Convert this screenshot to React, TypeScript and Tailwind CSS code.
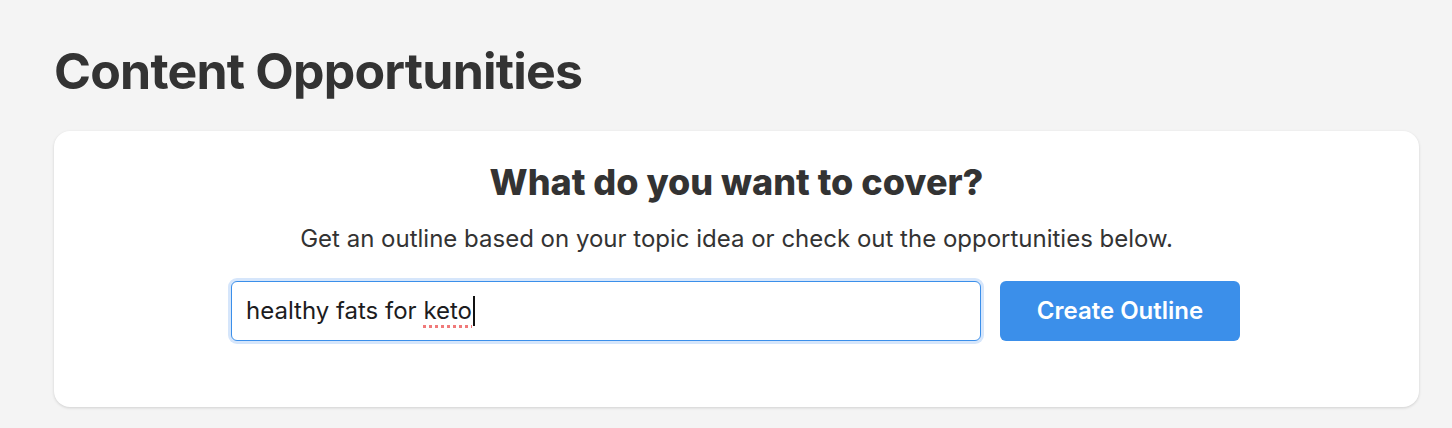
import React from 'react';

export default function App() {
  return (
    <div className="min-h-screen bg-[#f4f4f4] pl-[54px] pr-[33px] pt-[41px] font-['Inter',sans-serif] text-[#333333]">
      <h1 className="text-[50px] font-bold leading-[60px] tracking-[-0.8px]">Content Opportunities</h1>

      <div className="mt-[30px] rounded-2xl bg-white pt-[31px] pb-[66px] shadow-[0_1px_3px_rgba(0,0,0,0.15)]">
        <h2 className="text-center text-[36px] font-extrabold leading-[40px]">What do you want to cover?</h2>
        <p className="mt-[21px] text-center text-[24px] leading-[32px]">
          Get an outline based on your topic idea or check out the opportunities below.
        </p>

        <div className="mt-[26px] flex justify-center gap-[19px] pr-[2px]">
          {/* Campo de búsqueda */}
          <div className="flex h-[60px] w-[750px] items-center rounded-md border border-[#3b8fea] bg-white px-[14px] text-[24px] text-[#1c1c1e] ring-[3px] ring-[#d6e6fb]">
            <span className="whitespace-pre">healthy fats for </span>
            <span className="underline decoration-[#f07a7a] decoration-dotted decoration-[3px] underline-offset-[6px]">keto</span>
            <span className="ml-[1px] h-[30px] w-[2px] bg-[#111]" />
          </div>
          <button className="h-[60px] w-[240px] rounded-md bg-[#3b8fea] text-[24px] font-semibold text-white">
            Create Outline
          </button>
        </div>
      </div>
    </div>
  );
}
